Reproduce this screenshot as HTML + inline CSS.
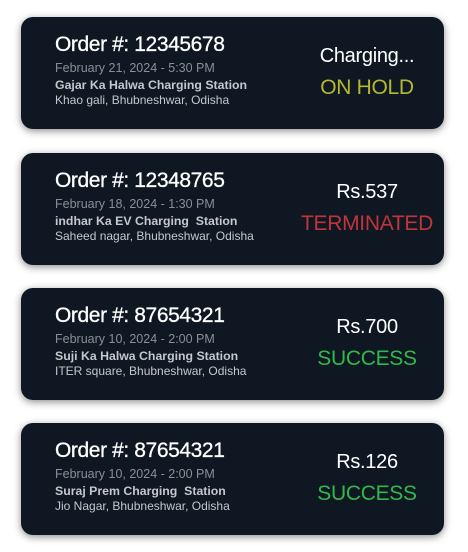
<!DOCTYPE html>
<html><head><style>
body{margin:0;width:468px;height:552px;background:#fff;font-family:"Liberation Sans",sans-serif;position:relative;overflow:hidden}
.c{position:absolute;left:21px;width:423px;height:112px;background:#0f1822;border-radius:12px;box-shadow:0 2px 8px rgba(0,0,0,.45)}
.t{position:absolute;left:34px;top:16px;color:#fff;font-size:21px;letter-spacing:-.4px;-webkit-text-stroke:.3px #fff}
.d{position:absolute;left:34px;top:44px;color:#8a8f96;font-size:12.5px}
.s{position:absolute;left:34px;top:61px;color:#c4c7cb;font-size:12.3px;font-weight:bold}
.a{position:absolute;left:34px;top:76px;color:#c4c7cb;font-size:12px}
.r1{position:absolute;left:270px;width:152px;text-align:center;top:28px;color:#fff;font-size:20px;letter-spacing:-.3px}
.r2{position:absolute;left:270px;width:152px;text-align:center;top:59px;font-size:21px;letter-spacing:-.3px}
</style></head><body>
<div class="c" style="top:17px"><div class="t">Order #: 12345678</div><div class="d">February 21, 2024 - 5:30 PM</div><div class="s">Gajar Ka Halwa Charging Station</div><div class="a">Khao gali, Bhubneshwar, Odisha</div><div class="r1">Charging...</div><div class="r2" style="color:#b5b830">ON HOLD</div></div>
<div class="c" style="top:153px"><div class="t">Order #: 12348765</div><div class="d">February 18, 2024 - 1:30 PM</div><div class="s">indhar Ka EV Charging&nbsp; Station</div><div class="a">Saheed nagar, Bhubneshwar, Odisha</div><div class="r1">Rs.537</div><div class="r2" style="color:#c0343a">TERMINATED</div></div>
<div class="c" style="top:288px"><div class="t">Order #: 87654321</div><div class="d">February 10, 2024 - 2:00 PM</div><div class="s">Suji Ka Halwa Charging Station</div><div class="a">ITER square, Bhubneshwar, Odisha</div><div class="r1">Rs.700</div><div class="r2" style="color:#32b84a">SUCCESS</div></div>
<div class="c" style="top:423px"><div class="t">Order #: 87654321</div><div class="d">February 10, 2024 - 2:00 PM</div><div class="s">Suraj Prem Charging&nbsp; Station</div><div class="a">Jio Nagar, Bhubneshwar, Odisha</div><div class="r1">Rs.126</div><div class="r2" style="color:#32b84a">SUCCESS</div></div>
</body></html>
